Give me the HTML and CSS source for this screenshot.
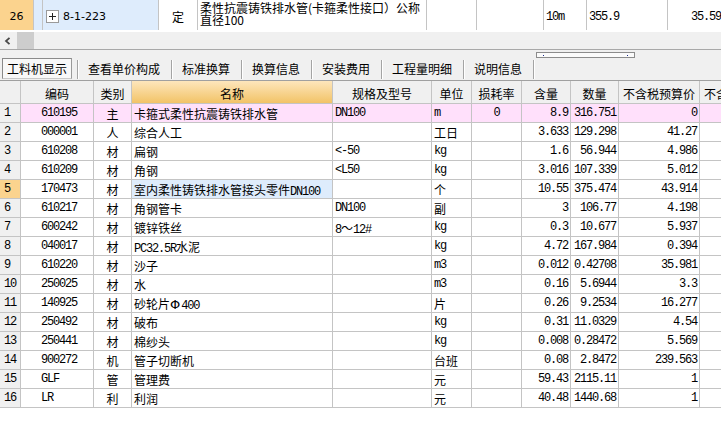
FILE: index.html
```html
<!DOCTYPE html>
<html lang="zh-CN">
<head>
<meta charset="utf-8">
<title>工料机显示</title>
<link rel="stylesheet" href="styles.css">
</head>
<body>
<div class="app">
  <div class="toprow">
    <div class="tc orange">26</div>
    <div class="tc blue"></div>
    <div class="tc blue code">
      <svg class="plus" width="13" height="13" viewBox="0 0 13 13"><rect x="0.5" y="0.5" width="12" height="12" fill="#fff" stroke="#9a9a9a"/><path d="M3 6.5H10M6.5 3V10" stroke="#222" stroke-width="1" fill="none"/></svg>
      <span class="qd">8-1-223</span>
    </div>
    <div class="tc center c">定</div>
    <div class="tc tname"><span class="tl">柔性抗震铸铁排水管(卡箍柔性接口）公称</span><span class="tl">直径100</span></div>
    <div class="tc"></div>
    <div class="tc"></div>
    <div class="tc">10m</div>
    <div class="tc">355.9</div>
    <div class="tc last">35.59</div>
  </div>

  <div class="hscroll">
    <span class="arrow"><svg width="7" height="8" viewBox="0 0 7 8"><polyline points="5.5,0.8 2,4 5.5,7.2" fill="none" stroke="#4a4a4a" stroke-width="1.8"/></svg></span>
    <span class="thumb"></span>
  </div>

  <div class="band"><div class="grip"><i></i><i></i></div></div>

  <div class="tabs">
    <div class="tab sel">工料机显示</div>
    <span class="sep first"></span>
    <div class="tab">查看单价构成</div><span class="sep"></span>
    <div class="tab">标准换算</div><span class="sep"></span>
    <div class="tab">换算信息</div><span class="sep"></span>
    <div class="tab">安装费用</div><span class="sep"></span>
    <div class="tab">工程量明细</div><span class="sep"></span>
    <div class="tab">说明信息</div><span class="sep"></span>
  </div>

  <div class="grid">
    <div class="row hrow">
      <div class="g h"></div>
      <div class="g h">编码</div>
      <div class="g h">类别</div>
      <div class="g h hsel">名称</div>
      <div class="g h">规格及型号</div>
      <div class="g h">单位</div>
      <div class="g h">损耗率</div>
      <div class="g h">含量</div>
      <div class="g h">数量</div>
      <div class="g h">不含税预算价</div>
      <div class="g h">不含税市场价</div>
    </div>

    <div class="row pink">
      <div class="g rn">1</div><div class="g code">610195</div><div class="g type">主</div>
      <div class="g name">卡箍式柔性抗震铸铁排水管</div><div class="g">DN100</div><div class="g">m</div>
      <div class="g mid">0</div><div class="g num">8.9</div><div class="g num">316.751</div><div class="g num">0</div><div class="g"></div>
    </div>
    <div class="row">
      <div class="g rn">2</div><div class="g code">000001</div><div class="g type">人</div>
      <div class="g name">综合人工</div><div class="g"></div><div class="g c">工日</div>
      <div class="g"></div><div class="g num">3.633</div><div class="g num">129.298</div><div class="g num">41.27</div><div class="g"></div>
    </div>
    <div class="row">
      <div class="g rn">3</div><div class="g code">610208</div><div class="g type">材</div>
      <div class="g name">扁钢</div><div class="g">&lt;-50</div><div class="g">kg</div>
      <div class="g"></div><div class="g num">1.6</div><div class="g num">56.944</div><div class="g num">4.986</div><div class="g"></div>
    </div>
    <div class="row">
      <div class="g rn">4</div><div class="g code">610209</div><div class="g type">材</div>
      <div class="g name">角钢</div><div class="g">&lt;L50</div><div class="g">kg</div>
      <div class="g"></div><div class="g num">3.016</div><div class="g num">107.339</div><div class="g num">5.012</div><div class="g"></div>
    </div>
    <div class="row">
      <div class="g rn cur">5</div><div class="g code">170473</div><div class="g type">材</div>
      <div class="g name selname">室内柔性铸铁排水管接头零件<span class="m">DN100</span></div><div class="g"></div><div class="g c">个</div>
      <div class="g"></div><div class="g num">10.55</div><div class="g num">375.474</div><div class="g num">43.914</div><div class="g"></div>
    </div>
    <div class="row">
      <div class="g rn">6</div><div class="g code">610217</div><div class="g type">材</div>
      <div class="g name">角钢管卡</div><div class="g">DN100</div><div class="g c">副</div>
      <div class="g"></div><div class="g num">3</div><div class="g num">106.77</div><div class="g num">4.198</div><div class="g"></div>
    </div>
    <div class="row">
      <div class="g rn">7</div><div class="g code">600242</div><div class="g type">材</div>
      <div class="g name">镀锌铁丝</div><div class="g">8<span class="w">～</span>12#</div><div class="g">kg</div>
      <div class="g"></div><div class="g num">0.3</div><div class="g num">10.677</div><div class="g num">5.937</div><div class="g"></div>
    </div>
    <div class="row">
      <div class="g rn">8</div><div class="g code">040017</div><div class="g type">材</div>
      <div class="g name"><span class="m">PC32.5R</span>水泥</div><div class="g"></div><div class="g">kg</div>
      <div class="g"></div><div class="g num">4.72</div><div class="g num">167.984</div><div class="g num">0.394</div><div class="g"></div>
    </div>
    <div class="row">
      <div class="g rn">9</div><div class="g code">610220</div><div class="g type">材</div>
      <div class="g name">沙子</div><div class="g"></div><div class="g">m3</div>
      <div class="g"></div><div class="g num">0.012</div><div class="g num">0.42708</div><div class="g num">35.981</div><div class="g"></div>
    </div>
    <div class="row">
      <div class="g rn">10</div><div class="g code">250025</div><div class="g type">材</div>
      <div class="g name">水</div><div class="g"></div><div class="g">m3</div>
      <div class="g"></div><div class="g num">0.16</div><div class="g num">5.6944</div><div class="g num">3.3</div><div class="g"></div>
    </div>
    <div class="row">
      <div class="g rn">11</div><div class="g code">140925</div><div class="g type">材</div>
      <div class="g name">砂轮片<span class="phi">Φ</span><span class="m">400</span></div><div class="g"></div><div class="g c">片</div>
      <div class="g"></div><div class="g num">0.26</div><div class="g num">9.2534</div><div class="g num">16.277</div><div class="g"></div>
    </div>
    <div class="row">
      <div class="g rn">12</div><div class="g code">250492</div><div class="g type">材</div>
      <div class="g name">破布</div><div class="g"></div><div class="g">kg</div>
      <div class="g"></div><div class="g num">0.31</div><div class="g num">11.0329</div><div class="g num">4.54</div><div class="g"></div>
    </div>
    <div class="row">
      <div class="g rn">13</div><div class="g code">250441</div><div class="g type">材</div>
      <div class="g name">棉纱头</div><div class="g"></div><div class="g">kg</div>
      <div class="g"></div><div class="g num">0.008</div><div class="g num">0.28472</div><div class="g num">5.569</div><div class="g"></div>
    </div>
    <div class="row">
      <div class="g rn">14</div><div class="g code">900272</div><div class="g type">机</div>
      <div class="g name">管子切断机</div><div class="g"></div><div class="g c">台班</div>
      <div class="g"></div><div class="g num">0.08</div><div class="g num">2.8472</div><div class="g num">239.563</div><div class="g"></div>
    </div>
    <div class="row">
      <div class="g rn">15</div><div class="g code">GLF</div><div class="g type">管</div>
      <div class="g name">管理费</div><div class="g"></div><div class="g c">元</div>
      <div class="g"></div><div class="g num">59.43</div><div class="g num">2115.11</div><div class="g num">1</div><div class="g"></div>
    </div>
    <div class="row">
      <div class="g rn">16</div><div class="g code">LR</div><div class="g type">利</div>
      <div class="g name">利润</div><div class="g"></div><div class="g c">元</div>
      <div class="g"></div><div class="g num">40.48</div><div class="g num">1440.68</div><div class="g num">1</div><div class="g"></div>
    </div>
  </div>
</div>
</body>
</html>
```

FILE: styles.css
```css
html, body {
  margin: 0;
  padding: 0;
  background: #ffffff;
}
body {
  width: 721px;
  height: 428px;
  overflow: hidden;
  color: #000;
}
.app {
  width: 721px;
  overflow: hidden;
}

/* ---------- top (quota) row ---------- */
.toprow {
  display: grid;
  grid-template-columns: 34px 9px 116px 39px 229px 50px 67px 43px 81px 54px;
  height: 30px;
  margin-bottom: 2px;
  width: 721px;
}
.tc {
  box-sizing: border-box;
  border-right: 1px solid #c4c4c4;
  height: 30px;
  overflow: hidden;
  white-space: nowrap;
  display: flex;
  align-items: center;
  padding: 3px 2px 0;
  font-family: "Liberation Mono", "Noto Sans CJK SC", monospace;
  font-size: 12px;
  letter-spacing: -1.2px;
}
.tc.orange {
  background: #fbd38e;
  justify-content: center;
  font-family: "DejaVu Sans", sans-serif;
  font-size: 11px;
  letter-spacing: 0;
}
.tc.blue {
  background: #deecfc;
}
.tc.code {
  padding-left: 3px;
}
.plus {
  flex: none;
  margin-right: 4px;
}
.qd {
  font-family: "DejaVu Sans", sans-serif;
  font-size: 11px;
  letter-spacing: 0;
}
.tc.center {
  justify-content: center;
}
.tc.c {
  font-family: "Noto Sans CJK SC", sans-serif;
  letter-spacing: 0;
}
.tc.tname {
  display: flex;
  flex-direction: column;
  align-items: flex-start;
  justify-content: flex-start;
  padding-top: 2px;
  font-family: "Noto Sans CJK SC", sans-serif;
  letter-spacing: 0;
}
.tl {
  display: block;
  height: 12px;
  line-height: 12px;
}
.tc.last {
  border-right: none;
  justify-content: flex-end;
  padding-right: 1px;
}

/* ---------- horizontal scrollbar ---------- */
.hscroll {
  height: 17px;
  background: #f0f0f0;
  border-bottom: 1px solid #a8a8a8;
  display: flex;
}
.arrow {
  width: 17px;
  display: flex;
  align-items: center;
  padding-left: 4px;
  box-sizing: border-box;
}
.thumb {
  width: 17px;
  background: #cdcdcd;
}

/* ---------- splitter band ---------- */
.band {
  height: 8px;
  background: #f0f0f0;
  overflow: hidden;
}
.grip {
  box-sizing: border-box;
  margin: 2px 0 0 536px;
  width: 99px;
  height: 6px;
  border: 1px solid #8c8c8c;
  background: #fbfbfb;
  display: flex;
  justify-content: space-between;
  align-items: center;
  padding: 0 6px;
}
.grip i {
  display: block;
  width: 1px;
  height: 1px;
  background: #1a2a8a;
}

/* ---------- tab strip ---------- */
.tabs {
  height: 22px;
  background: #f0f0f0;
  border-bottom: 1px solid #a0a0a0;
  display: flex;
  align-items: center;
  font-family: "Noto Sans CJK SC", sans-serif;
  font-size: 12px;
}
.tab {
  padding: 0 11px 0 10px;
  line-height: 20px;
  white-space: nowrap;
}
.tab.sel {
  align-self: flex-start;
  box-sizing: border-box;
  height: 21px;
  margin-left: 2px;
  padding: 0 4px;
  border: 1px solid #8a8a8a;
  border-right-color: #9a9a9a;
  border-bottom-color: #c8c8c8;
  background: #f8f8f8;
  line-height: 19px;
}
.sep {
  width: 1px;
  height: 19px;
  background: #a4a4a4;
  box-shadow: 1px 0 0 #ffffff;
  flex: none;
}
.sep.first {
  margin-left: 5px;
}

/* ---------- material grid ---------- */
.grid {
  width: 781px;
  background: #ffffff;
}
.row {
  display: grid;
  grid-template-columns: 21px 73px 38px 201px 99px 40px 50px 49px 48px 81px 81px;
  height: 19px;
}
.g {
  box-sizing: border-box;
  border-right: 1px solid #c4c4c4;
  border-bottom: 1px solid #c4c4c4;
  white-space: nowrap;
  overflow: hidden;
  padding: 1px 2px 0;
  font-family: "Liberation Mono", "Noto Sans CJK SC", monospace;
  font-size: 12px;
  line-height: 17px;
  letter-spacing: -1.2px;
}
.hrow {
  height: 23px;
}
.g.h {
  background: #f0f0f0;
  text-align: center;
  font-family: "Noto Sans CJK SC", sans-serif;
  letter-spacing: 0;
  line-height: 19px;
  padding-top: 3px;
}
.g.hsel {
  background: linear-gradient(#fde6bc, #f2c367);
}
.g.rn {
  background: #f0f0f0;
  padding-left: 4px;
}
.g.rn.cur {
  background: #fbd38e;
}
.g.code {
  padding-left: 20px;
}
.g.type {
  text-align: center;
  font-family: "Noto Sans CJK SC", sans-serif;
  letter-spacing: 0;
}
.g.name,
.g.c {
  font-family: "Noto Sans CJK SC", sans-serif;
  letter-spacing: 0;
}
.m {
  font-family: "Liberation Mono", monospace;
  letter-spacing: -1.2px;
}
.w {
  font-family: "Noto Sans CJK SC", sans-serif;
  letter-spacing: 0;
}
.phi {
  font-family: "DejaVu Sans", sans-serif;
  font-size: 13px;
  letter-spacing: 0;
  padding-right: 1px;
}
.g.mid {
  text-align: center;
}
.g.num {
  text-align: right;
  padding-right: 2px;
}
.row.pink .g:not(.rn) {
  background: #ffe0fb;
}
.g.selname {
  background: #deecfc;
}
```
